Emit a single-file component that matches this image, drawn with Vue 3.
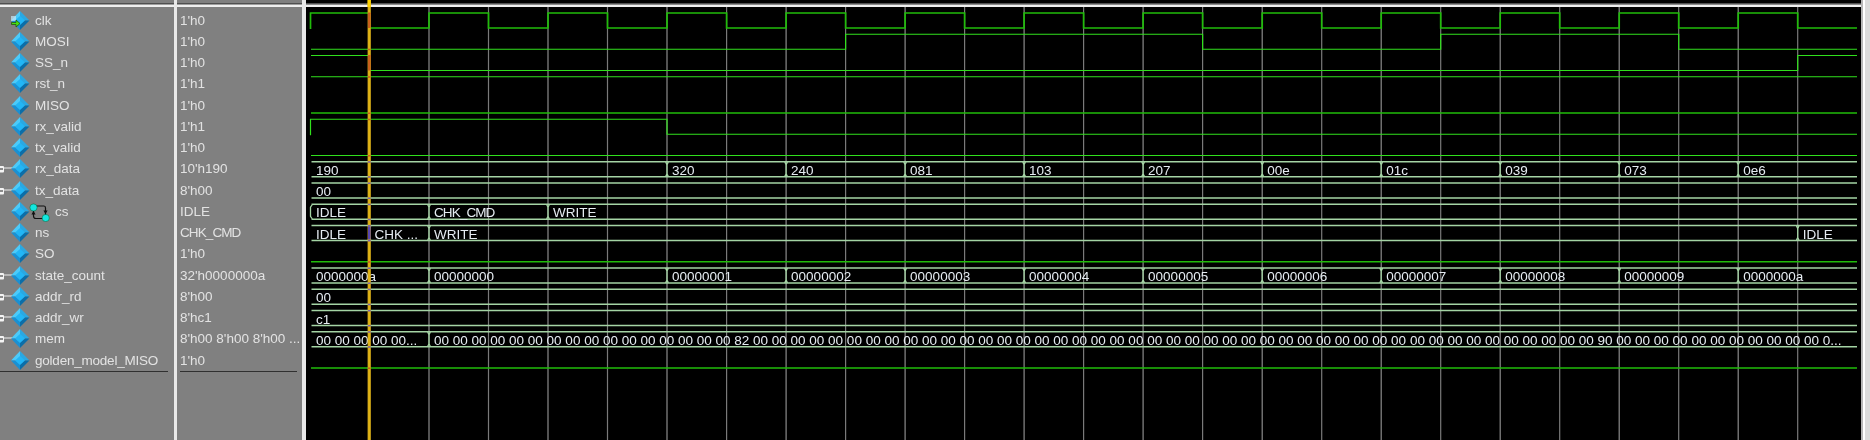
<template>
  <div class="viewer">
    <div class="col names">
      <div class="head"></div>
      <div class="rows">
        <div v-for="s in signals" :key="s.name" class="row">
          <svg class="ic" :viewBox="`0 0 ${s.fsm ? 51 : 31} 21`" :width="s.fsm ? 51 : 31" height="21">
            <g v-if="s.bus">
              <path d="M4 10H12" stroke="#dcdcdc" stroke-width="1.2" />
              <rect x="-3" y="8" width="7" height="6.5" rx="1" fill="#f4f4f4" />
              <path d="M0 11H3" stroke="#222" stroke-width="1" />
            </g>
            <polygon points="20,1 11,10.5 20,10.5" fill="#4ccbfa" />
            <polygon points="20,1 29.5,10.5 20,10.5" fill="#2aa8e2" />
            <polygon points="11,10.5 20,20 20,10.5" fill="#1b90d2" />
            <polygon points="29.5,10.5 20,20 20,10.5" fill="#0c6ea8" />
            <polygon points="20,6 25,10.5 20,15 15,10.5" fill="#22b6f6" />
            <g v-if="s.clock">
              <rect x="11" y="6" width="5" height="5" fill="#c8e8f8" opacity=".7" />
              <path d="M11.5 12.5H16V10L20 13.5L16 17V14.5H11.5Z" fill="#46e010" stroke="#1c4a00" stroke-width=".7" />
            </g>
            <g v-if="s.fsm">
              <path d="M34 5H44Q45.5 5 45.5 7V14M33.5 9V15Q33.5 17.5 36 17.5H43" fill="none" stroke="#111" stroke-width="1.2" />
              <path d="M43.4 9.5H47.6L45.5 13Z M31.4 13.5H35.6L33.5 10Z" fill="#111" />
              <circle cx="33.5" cy="6.5" r="3.6" fill="#12e6e0" stroke="#063" stroke-width=".5" />
              <circle cx="45.7" cy="17" r="3.6" fill="#12e6e0" stroke="#063" stroke-width=".5" />
            </g>
          </svg>
          <span class="label" :class="{ tight: s.name === 'golden_model_MISO' }">{{ s.name }}</span>
        </div>
      </div>
      <div class="rule name-rule"></div>
    </div>

    <div class="col values">
      <div class="head"></div>
      <div class="rows">
        <div v-for="s in signals" :key="s.name" class="row">
          <span class="label" :class="{ squeezed: s.value === 'CHK_CMD' }">{{ s.value }}</span>
        </div>
      </div>
      <div class="rule value-rule"></div>
    </div>

    <div class="wave">
      <svg width="1555" height="440" viewBox="306 0 1555 440">
        <rect x="306" y="3" width="1555" height="1.5" fill="#505050" />
        <rect x="306" y="4.5" width="1555" height="2.5" fill="#efefef" />

        <path v-for="k in 24" :key="k" :d="`M${edge(k)} 7V440`" :stroke="k % 2 ? '#8c8c8c' : '#7a7a7a'" stroke-width="1.2" />

        <template v-for="s in traces" :key="s.name">
          <path v-if="s.d" :d="s.d" fill="none" :stroke="s.thick ? '#20bc0a' : '#30e01c'" :stroke-width="s.thick ? 1.7 : 1.2" />
          <template v-else>
            <path :d="s.frame" fill="none" stroke="#a4d4a4" stroke-width="1.3" />
            <text
              v-for="t in s.labels"
              :key="t.x"
              :x="t.x"
              :y="s.top + 13.1"
              class="bus-text"
              :class="{ squeezed: t.text === 'CHK_CMD' }"
            >{{ t.text }}</text>
          </template>
        </template>

        <rect x="367.6" y="0" width="3.2" height="440" fill="#d2a81c" />
        <rect x="368.4" y="0" width="1.8" height="440" fill="#e0b414" />
        <rect x="367.6" y="0" width="3.2" height="7" fill="#ffd400" />
        <rect v-for="(m, i) in cursorMarks" :key="i" x="368" :y="m.y" width="2.6" :height="m.h" :fill="m.c" />
      </svg>
    </div>

    <div class="edge-strip"></div>
  </div>
</template>

<script setup>
const X0 = 310.5
const XEND = 1857
const period = 59.51

const edge = (k) => +(369.5 + period * k).toFixed(1)
const rowTop = (i) => 13 + 21.25 * i

// state is listed as the edges (half clock steps) where the level flips
const signals = [
  { name: 'clk', value: "1'h0", clock: true, thick: true, high: true, edges: Array.from({ length: 25 }, (_, k) => k), rise: true },
  { name: 'MOSI', value: "1'h0", high: false, edges: [8, 14, 18, 22] },
  { name: 'SS_n', value: "1'h0", high: true, edges: [0, 24] },
  { name: 'rst_n', value: "1'h1", high: true, edges: [] },
  { name: 'MISO', value: "1'h0", thick: true, high: false, edges: [] },
  { name: 'rx_valid', value: "1'h1", high: true, edges: [5], rise: true },
  { name: 'tx_valid', value: "1'h0", high: false, edges: [] },
  {
    name: 'rx_data', value: "10'h190", bus: true,
    segs: [[-1, '190'], [5, '320'], [7, '240'], [9, '081'], [11, '103'], [13, '207'], [15, '00e'], [17, '01c'], [19, '039'], [21, '073'], [23, '0e6']],
  },
  { name: 'tx_data', value: "8'h00", bus: true, segs: [[-1, '00']] },
  { name: 'cs', value: 'IDLE', fsm: true, open: true, segs: [[-1, 'IDLE'], [1, 'CHK_CMD'], [3, 'WRITE']] },
  { name: 'ns', value: 'CHK_CMD', segs: [[-1, 'IDLE'], [0, 'CHK ...'], [1, 'WRITE'], [24, 'IDLE']] },
  { name: 'SO', value: "1'h0", thick: true, high: false, edges: [] },
  {
    name: 'state_count', value: "32'h0000000a", bus: true,
    segs: [[-1, '0000000a'], [1, '00000000'], [5, '00000001'], [7, '00000002'], [9, '00000003'], [11, '00000004'], [13, '00000005'], [15, '00000006'], [17, '00000007'], [19, '00000008'], [21, '00000009'], [23, '0000000a']],
  },
  { name: 'addr_rd', value: "8'h00", bus: true, segs: [[-1, '00']] },
  { name: 'addr_wr', value: "8'hc1", bus: true, segs: [[-1, 'c1']] },
  { name: 'mem', value: "8'h00 8'h00 8'h00 ...", bus: true, segs: [[-1, '00 00 00 00 00...'], [1, memText()]] },
  { name: 'golden_model_MISO', value: "1'h0", thick: true, high: false, edges: [] },
]

function memText() {
  const bytes = Array.from({ length: 74 }, () => '00')
  bytes[16] = '82'
  bytes[62] = '90'
  return bytes.join(' ') + ' 0...'
}

function levelPath(s, top) {
  const hi = top
  const lo = top + 15
  let y = s.high ? hi : lo
  let d = s.rise ? `M${X0} ${lo + 1}V${hi}H${X0}` : `M${X0 + 0.5} ${y}`
  for (const k of s.edges) {
    const x = edge(k)
    y = y === hi ? lo : hi
    d += `H${x}V${y}`
  }
  return d + `H${XEND}`
}

function busFrame(s, top) {
  const bot = top + 15
  let d = `M${X0 + 1} ${top}H${XEND}M${X0 + 1} ${bot}H${XEND}`
  if (s.open) d += `M${X0 + 2} ${top}L${X0} ${top + 3}V${bot - 3}L${X0 + 2} ${bot}`
  for (const [k] of s.segs) {
    if (k < 0) continue
    const x = edge(k)
    d += `M${x - 1.5} ${top}L${x} ${top + 3}V${bot - 3}L${x - 1.5} ${bot}M${x + 1.5} ${top}L${x} ${top + 3}M${x} ${bot - 3}L${x + 1.5} ${bot}`
  }
  return d
}

const traces = signals.map((s, i) => {
  const top = rowTop(i)
  if (s.segs) {
    return {
      name: s.name,
      top,
      frame: busFrame(s, top),
      labels: s.segs.map(([k, text]) => ({ x: k < 0 ? 316 : edge(k) + 5, text })),
    }
  }
  return { name: s.name, thick: s.thick, d: levelPath(s, top) }
})

// where a trace crosses the cursor the colours get mixed, reddish on wires, bluish on buses
const cursorMarks = signals.flatMap((s, i) => {
  const top = rowTop(i)
  if (s.segs) {
    const marks = [{ y: top - 0.5, h: 1.5, c: '#7c62a8' }, { y: top + 14.5, h: 1.5, c: '#7c62a8' }]
    if (s.name === 'ns') marks.push({ y: top + 1, h: 13, c: '#5a48b0' })
    return marks
  }
  const y = s.high ? top : top + 15
  const marks = [{ y: y - 0.5, h: 1.5, c: '#c8601c' }]
  if (s.edges.includes(0)) marks.push({ y: top, h: 15, c: '#c8601c' })
  return marks
})
</script>

<style scoped>
.viewer {
  display: flex;
  width: 1870px;
  height: 440px;
  overflow: hidden;
  background: #808080;
  font-family: "Liberation Sans", Arial, sans-serif;
  font-size: 13.5px;
}
.col {
  flex: none;
  box-sizing: border-box;
  height: 440px;
  background: #808080;
  border-right: 3px solid #e9e9e9;
  color: #e2e2e2;
}
.names {
  width: 177px;
}
.values {
  width: 129px;
  padding-left: 3px;
  border-right-width: 4px;
}
.head {
  height: 3px;
  margin-bottom: 4px;
  box-shadow: 0 1.5px 0 #505050, 0 4px 0 #efefef;
}
.values .head {
  margin-left: -3px;
}
.rows {
  padding-top: 2.5px;
  filter: blur(0.3px);
}
.row {
  display: flex;
  align-items: center;
  height: 21.25px;
  white-space: nowrap;
  overflow: hidden;
}
.ic {
  flex: none;
  margin-right: 4px;
  overflow: hidden;
}
.label {
  line-height: 21.25px;
}
.tight {
  letter-spacing: -0.22px;
}
.squeezed {
  letter-spacing: -0.9px;
}
.rule {
  height: 1px;
  margin-top: 0.5px;
  background: #303030;
}
.name-rule {
  width: 168px;
}
.value-rule {
  width: 117px;
}
.wave {
  flex: none;
  width: 1555px;
  height: 440px;
  background: #000;
}
.wave svg {
  display: block;
}
.bus-text {
  font-family: "Liberation Sans", Arial, sans-serif;
  font-size: 13.5px;
  fill: #e6ecf2;
  filter: blur(0.25px);
}
.edge-strip {
  flex: 1;
  height: 440px;
  background: #dcdcdc;
  border-left: 2px solid #b8b8b8;
  box-shadow: inset 2px 0 0 #fff;
}
</style>
